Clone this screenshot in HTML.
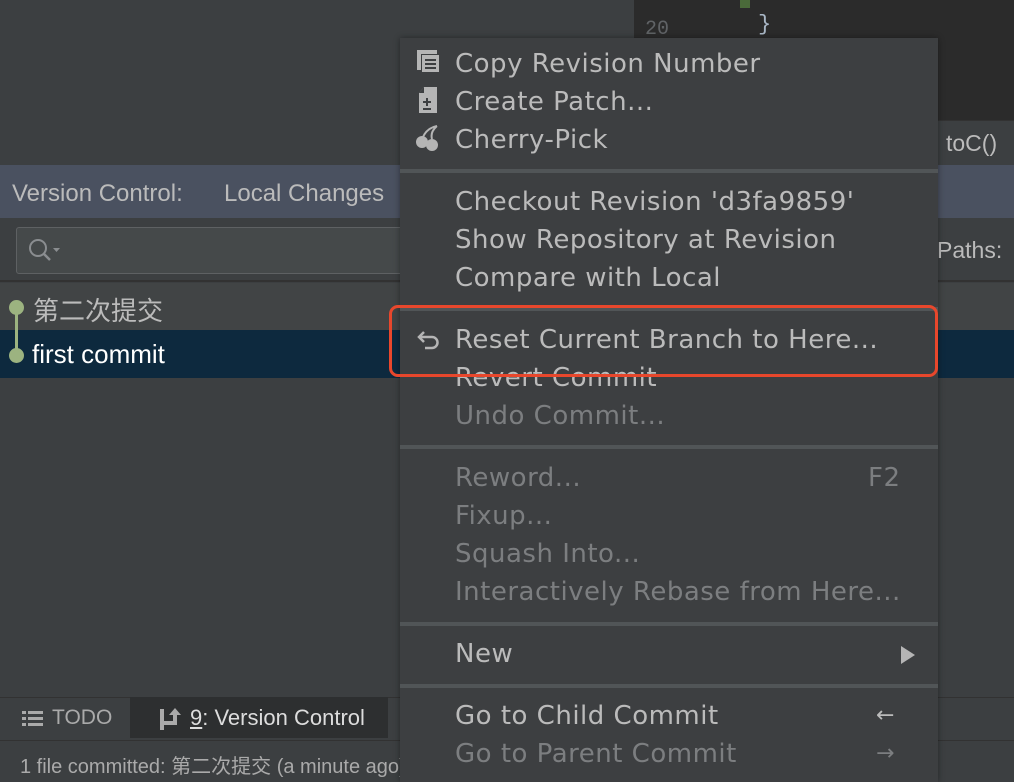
<!DOCTYPE html>
<html style="overflow:hidden;width:1014px;height:782px"><head><meta charset="utf-8"><style>
*{margin:0;padding:0;box-sizing:border-box}
body{width:1014px;height:782px;overflow:hidden;background:#3c3f41;position:relative;font-family:"Liberation Sans","Noto Sans CJK SC",sans-serif}
.a{position:absolute}
.menu{position:absolute;left:400px;top:38px;width:538px;height:744px;overflow:hidden;background:#3d3f41;box-shadow:0 0 6px rgba(0,0,0,.4);font-family:"DejaVu Sans","Noto Sans CJK SC",sans-serif;font-size:26px;letter-spacing:0.5px;color:#bbbbbb}
.mi{position:absolute;left:55px;white-space:nowrap;line-height:38px;height:38px}
.d{color:#7c7e80}
.sep{position:absolute;left:0;width:538px;height:4px;background:#515557}
.sc{position:absolute;white-space:nowrap;line-height:38px}
</style></head><body>
<div class="a" style="left:634px;top:0;width:380px;height:120px;background:#2b2b2b"></div>
<div class="a" style="left:645px;top:18px;color:#606366;font-family:'Liberation Mono',monospace;font-size:20px">20</div>
<div class="a" style="left:740px;top:0;width:10px;height:8px;background:#4a6a3a"></div>
<div class="a" style="left:758px;top:12px;color:#a9b7c6;font-family:'Liberation Mono',monospace;font-size:22px">}</div>
<div class="a" style="left:634px;top:120px;width:380px;height:45px;background:#3c3f41;border-top:1px solid #323232"></div>
<div class="a" style="left:946px;top:130px;color:#bbb;font-size:23px">toC()</div>
<div class="a" style="left:0;top:165px;width:1014px;height:53px;background:#4a5160"></div>
<div class="a" style="left:12px;top:180px;color:#bbb;font-size:24px">Version Control:</div>
<div class="a" style="left:224px;top:180px;color:#bbb;font-size:24px">Local Changes</div>
<div class="a" style="left:0;top:218px;width:1014px;height:64px;background:#3c3f41;border-bottom:2px solid #323232"></div>
<div class="a" style="left:16px;top:227px;width:420px;height:47px;border:1px solid #5e6163;border-radius:3px;background:#45494a"></div>
<svg class="a" style="left:27px;top:237px" width="36" height="28"><circle cx="11" cy="11" r="8" fill="none" stroke="#8a8d90" stroke-width="2"/><line x1="17" y1="17" x2="23" y2="23" stroke="#8a8d90" stroke-width="2.5"/><path d="M26 11h7l-3.5 4z" fill="#8a8d90"/></svg>
<div class="a" style="left:937px;top:237px;color:#bbb;font-size:23px">Paths:</div>
<div class="a" style="left:0;top:283px;width:1014px;height:47px;background:#414445"></div>
<div class="a" style="left:0;top:330px;width:1014px;height:48px;background:#0d293e"></div>
<div class="a" style="left:15px;top:307px;width:3px;height:48px;background:#9cb380"></div>
<div class="a" style="left:9px;top:300px;width:15px;height:15px;border-radius:50%;background:#9cb380"></div>
<div class="a" style="left:9px;top:348px;width:15px;height:15px;border-radius:50%;background:#9cb380"></div>
<div class="a" style="left:33px;top:291px;color:#bbb;font-size:26px">第二次提交</div>
<div class="a" style="left:32px;top:339px;color:#fff;font-size:26px">first commit</div>
<div class="a" style="left:0;top:697px;width:1014px;height:43px;background:#3c3f41;border-top:1px solid #323232"></div>
<div class="a" style="left:130px;top:697px;width:258px;height:41px;background:#2d2f30"></div>
<svg class="a" style="left:22px;top:710px" width="22" height="18"><g fill="#aaa"><rect x="0" y="1" width="4" height="3"/><rect x="6" y="1" width="15" height="3"/><rect x="0" y="7" width="4" height="3"/><rect x="6" y="7" width="15" height="3"/><rect x="0" y="13" width="4" height="3"/><rect x="6" y="13" width="15" height="3"/></g></svg>
<div class="a" style="left:52px;top:706px;color:#aaa;font-size:21px">TODO</div>
<svg class="a" style="left:159px;top:707px" width="24" height="24"><rect x="1" y="2" width="4" height="21" fill="#aaa"/><path d="M5 14h9V8h-4l6-7 6 7h-4v10H5z" fill="#aaa"/></svg>
<div class="a" style="left:190px;top:705px;color:#ddd;font-size:22px"><u>9</u>: Version Control</div>
<div class="a" style="left:0;top:740px;width:1014px;height:42px;background:#3c3f41;border-top:1px solid #323232"></div>
<div class="a" style="left:20px;top:750px;color:#aaa;font-size:20px;white-space:nowrap">1 file committed: 第二次提交 (a minute ago)</div>
<div class="menu">
<svg class="a" style="left:16px;top:11px" width="24" height="24"><rect x="1" y="1" width="4" height="20" fill="#b5b5b5"/><rect x="1" y="1" width="20" height="4" fill="#b5b5b5"/><rect x="6" y="6" width="17" height="17" fill="#b5b5b5"/><g stroke="#3d3f41" stroke-width="2"><line x1="9" y1="11" x2="20" y2="11"/><line x1="9" y1="15" x2="20" y2="15"/><line x1="9" y1="19" x2="20" y2="19"/></g></svg>
<div class="mi" style="top:7px">Copy Revision Number</div>
<svg class="a" style="left:17px;top:48px" width="22" height="28"><path d="M7 1h13v26H2V7z" fill="#b5b5b5"/><path d="M2 7h5V1z" fill="#3d3f41"/><g stroke="#3d3f41" stroke-width="2"><line x1="6" y1="16" x2="14" y2="16"/><line x1="10" y1="12" x2="10" y2="20"/><line x1="6" y1="23" x2="14" y2="23"/></g></svg>
<div class="mi" style="top:45px">Create Patch...</div>
<svg class="a" style="left:15px;top:86px" width="28" height="28"><circle cx="7" cy="18" r="6" fill="#b5b5b5"/><circle cx="17" cy="21" r="6" fill="#b5b5b5"/><path d="M8 13 Q12 4 22 2 M17 15 Q15 8 22 2" fill="none" stroke="#b5b5b5" stroke-width="2"/></svg>
<div class="mi" style="top:83px">Cherry-Pick</div>
<div class="sep" style="top:131px"></div>
<div class="mi" style="top:145px">Checkout Revision 'd3fa9859'</div>
<div class="mi" style="top:183px">Show Repository at Revision</div>
<div class="mi" style="top:221px">Compare with Local</div>
<div class="sep" style="top:269px"></div>
<svg class="a" style="left:16px;top:291px" width="28" height="22"><path d="M8 3L3 8l5 5" fill="none" stroke="#b5b5b5" stroke-width="2.5"/><path d="M3 8h13a5.5 5.5 0 0 1 0 11H9" fill="none" stroke="#b5b5b5" stroke-width="2.5"/></svg>
<div class="mi" style="top:283px">Reset Current Branch to Here...</div>
<div class="mi" style="top:321px">Revert Commit</div>
<div class="mi d" style="top:359px">Undo Commit...</div>
<div class="sep" style="top:407px"></div>
<div class="mi d" style="top:421px">Reword...</div>
<div class="sc d" style="left:468px;top:421px">F2</div>
<div class="mi d" style="top:459px">Fixup...</div>
<div class="mi d" style="top:497px">Squash Into...</div>
<div class="mi d" style="top:535px">Interactively Rebase from Here...</div>
<div class="sep" style="top:584px"></div>
<div class="mi" style="top:597px">New</div>
<svg class="a" style="left:500px;top:607px" width="16" height="20"><path d="M1 1l14 9-14 9z" fill="#b5b5b5"/></svg>
<div class="sep" style="top:646px"></div>
<div class="mi" style="top:659px">Go to Child Commit</div>
<div class="sc" style="left:476px;top:659px;font-size:22px">←</div>
<div class="mi d" style="top:697px">Go to Parent Commit</div>
<div class="sc d" style="left:476px;top:697px;font-size:22px">→</div>
</div>
<div class="a" style="left:389px;top:305px;width:549px;height:72px;border:3px solid #e8472c;border-radius:9px"></div>
</body></html>
